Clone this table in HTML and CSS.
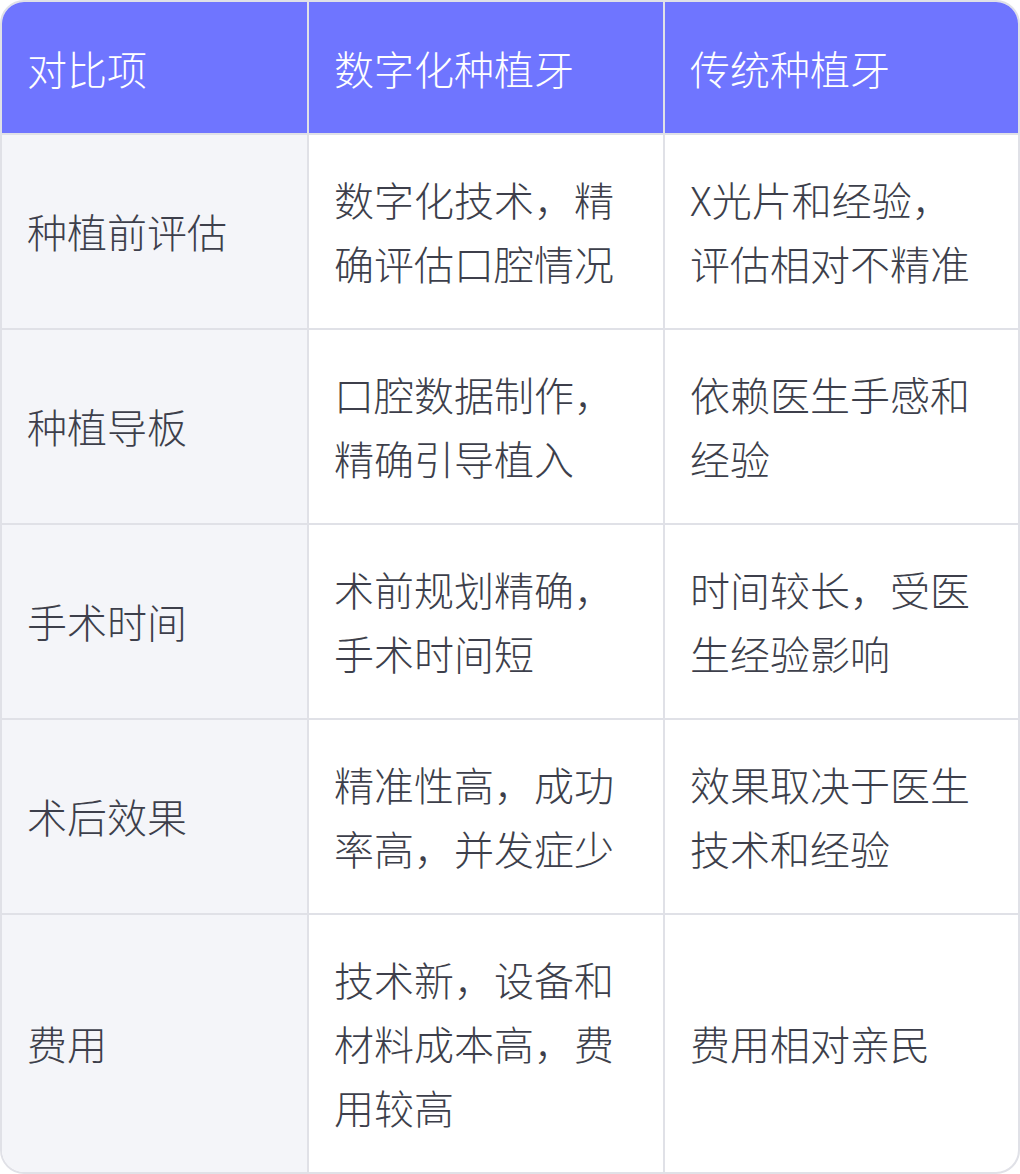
FILE: index.html
```html
<!DOCTYPE html>
<html lang="zh-CN">
<head>
<meta charset="utf-8">
<title>数字化种植牙对比</title>
<link rel="stylesheet" href="styles.css">
</head>
<body>
<div class="card">
  <table class="cmp">
    <colgroup>
      <col class="c1"><col class="c2"><col class="c3">
    </colgroup>
    <thead>
      <tr><th>对比项</th><th>数字化种植牙</th><th>传统种植牙</th></tr>
    </thead>
    <tbody>
      <tr><td>种植前评估</td><td>数字化技术，精确评估口腔情况</td><td>X光片和经验，评估相对不精准</td></tr>
      <tr><td>种植导板</td><td>口腔数据制作，精确引导植入</td><td>依赖医生手感和经验</td></tr>
      <tr><td>手术时间</td><td>术前规划精确，手术时间短</td><td>时间较长，受医生经验影响</td></tr>
      <tr><td>术后效果</td><td>精准性高，成功率高，并发症少</td><td>效果取决于医生技术和经验</td></tr>
      <tr><td>费用</td><td>技术新，设备和材料成本高，费用较高</td><td>费用相对亲民</td></tr>
    </tbody>
  </table>
</div>
</body>
</html>
```

FILE: styles.css
```css
html, body {
  margin: 0;
  padding: 0;
  background: #ffffff;
}
.card {
  width: 1020px;
  box-sizing: border-box;
  border: 2px solid #e0e1e7;
  border-radius: 24px;
  overflow: hidden;
  background: #ffffff;
}
.cmp {
  width: 100%;
  table-layout: fixed;
  border-collapse: separate;
  border-spacing: 0;
  font-family: "Noto Sans CJK SC", "Noto Sans", sans-serif;
  font-size: 40px;
  font-weight: 300;
  line-height: 64px;
  color: #3d3f4b;
}
.c1 { width: 307px; }
.c2 { width: 356px; }
.c3 { width: 353px; }
.cmp th,
.cmp td {
  padding: 32.5px 25px;
  text-align: left;
  vertical-align: middle;
  border-right: 2px solid #e0e1e7;
  border-bottom: 2px solid #e0e1e7;
  word-break: break-all;
}
.cmp th:last-child,
.cmp td:last-child {
  border-right: none;
  padding-right: 32px;
}
.cmp tbody tr:last-child td {
  border-bottom: none;
}
.cmp th {
  background: #6f75ff;
  color: #ffffff;
  font-weight: 300;
  padding-top: 33.5px;
  padding-bottom: 33px;
}
.cmp td:first-child {
  background: #f4f5f9;
}
```
